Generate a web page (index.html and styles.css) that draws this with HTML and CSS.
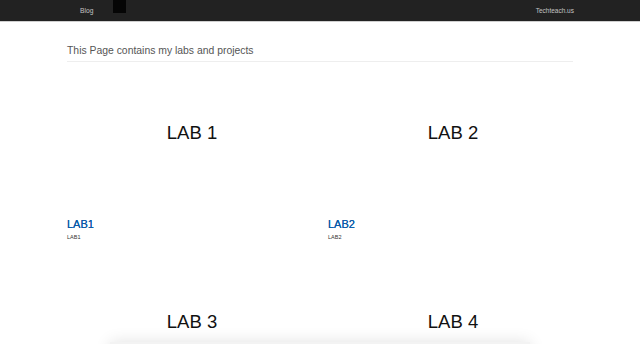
FILE: index.html
```html
<!DOCTYPE html>
<html>
<head>
    <title>Techteach.us - Labs</title>
    <link rel="stylesheet" href="styles.css">
</head>
<body>
    <div class="navbar">
        <a href="#" class="nav-link nav-blog">Blog</a>
        <span class="nav-square"></span>
        <a href="#" class="nav-link nav-brand">Techteach.us</a>
    </div>

    <div class="container">
        <h1 class="page-header">This Page contains my labs and projects</h1>

        <div class="labs">
            <div class="lab">
                <div class="thumb">LAB 1</div>
                <a href="#" class="lab-title">LAB1</a>
                <p class="lab-text">LAB1</p>
            </div>
            <div class="lab">
                <div class="thumb">LAB 2</div>
                <a href="#" class="lab-title">LAB2</a>
                <p class="lab-text">LAB2</p>
            </div>
            <div class="lab">
                <div class="thumb">LAB 3</div>
            </div>
            <div class="lab">
                <div class="thumb">LAB 4</div>
            </div>
        </div>
    </div>

    <!-- floating bar peeking in at the bottom -->
    <div class="dock"></div>
</body>
</html>
```

FILE: styles.css
```css
body {
    margin: 0;
    font-family: "Liberation Sans", Arial, sans-serif;
    background-color: #fff;
    color: #333;
}
.navbar {
    display: flex;
    align-items: flex-start;
    height: 21px;
    background-color: #222;
    border-bottom: 1px solid #cfcfcf;
    padding: 0 66px 0 80px;
}
.nav-link {
    color: #c4c4c4;
    text-decoration: none;
    line-height: 22px;
}
.nav-blog {
    font-size: 6.7px;
}
.nav-square {
    width: 13px;
    height: 13px;
    background-color: #050505;
    margin-left: 20px;
}
.nav-brand {
    margin-left: auto;
    font-size: 6.5px;
}
.container {
    width: 506px;
    margin: 0 auto;
}
.page-header {
    margin: 22px 0 0;
    padding-bottom: 4px;
    border-bottom: 1px solid #eee;
    font-size: 10.4px;
    line-height: 13px;
    font-weight: normal;
    color: #555;
}
.labs {
    display: grid;
    grid-template-columns: 250px 250px;
    column-gap: 11px;
    row-gap: 20px;
    margin-top: 10px;
}
.thumb {
    height: 122px;
    display: flex;
    align-items: center;
    justify-content: center;
    font-size: 18.5px;
    color: #111;
}
.lab-title {
    display: block;
    margin-top: 23px;
    font-size: 11px;
    line-height: 14px;
    color: #0a5aa8;
    text-shadow: 0 0 0.4px #0a5aa8;
    text-decoration: none;
}
.lab-text {
    margin: 3px 0 0;
    font-size: 5.5px;
    line-height: 7px;
    color: #333;
}
.dock {
    position: fixed;
    left: 110px;
    bottom: -18px;
    width: 420px;
    height: 20px;
    background-color: #f3f3f3;
    box-shadow: 0 0 16px rgba(0, 0, 0, 0.12);
}
```
